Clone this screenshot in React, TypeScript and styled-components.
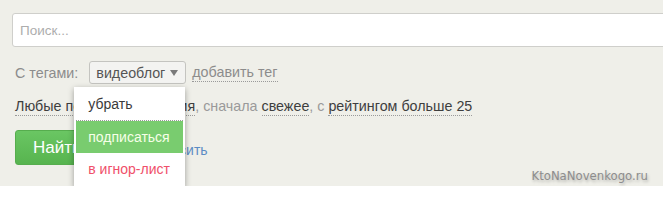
import React from "react";
import styled, { createGlobalStyle } from "styled-components";

const GlobalStyle = createGlobalStyle`
  html, body {
    margin: 0;
    padding: 0;
    background: #ffffff;
    font-family: "Liberation Sans", Arial, sans-serif;
  }
`;

const Panel = styled.div`
  position: relative;
  background: #efefe9;
  height: 186px;
  padding: 13px 0 0 12px;
  box-sizing: border-box;
  overflow-x: clip;
`;

const SearchInput = styled.input`
  display: block;
  width: calc(100% + 20px);
  height: 34px;
  box-sizing: border-box;
  border: 1px solid #cfcfcb;
  border-radius: 3px;
  background: #fff;
  padding: 0 7px;
  font-family: "Liberation Sans", Arial, sans-serif;
  font-size: 13.5px;
  color: #333;
  outline: none;

  &::placeholder {
    color: #adadad;
  }
`;

const Body = styled.div`
  padding-left: 3px;
  font-size: 14.3px;
`;

const TagsRow = styled.div`
  display: flex;
  align-items: center;
  gap: 6px;
  margin-top: 14px;
  height: 23px;
`;

const Label = styled.span`
  color: #8c8c8c;
  margin-right: 5px;
`;

const TagWrap = styled.div`
  position: relative;
`;

const TagSelect = styled.div`
  display: flex;
  align-items: center;
  justify-content: space-between;
  width: 97px;
  height: 23px;
  box-sizing: border-box;
  padding: 0 7px 0 6px;
  border: 1px solid #c4c4c0;
  border-radius: 3px;
  background: #f3f3f1;
  color: #555;
`;

const Caret = styled.span`
  width: 0;
  height: 0;
  border-left: 4px solid transparent;
  border-right: 4px solid transparent;
  border-top: 6px solid #7a7a7a;
`;

const Dotted = styled.span<{ $dark?: boolean }>`
  color: ${(p) => (p.$dark ? "#3e3e3e" : "#8c8c8c")};
  border-bottom: 1px dotted #9a9a9a;
  padding-bottom: 1px;
  cursor: pointer;
`;

const Menu = styled.div`
  position: absolute;
  top: 26px;
  left: -15px;
  width: 111px;
  padding: 0 2px 2px;
  box-sizing: border-box;
  background: #fff;
  box-shadow: 0 2px 6px rgba(0, 0, 0, 0.35);
  z-index: 5;
`;

const MenuItem = styled.div<{ $tone?: "plain" | "active" | "danger" }>`
  height: ${(p) => (p.$tone === "plain" ? "33px" : "32px")};
  display: flex;
  align-items: center;
  padding-left: 12px;
  font-size: 14px;
  white-space: nowrap;
  color: ${(p) =>
    p.$tone === "active" ? "#f6ffe8" : p.$tone === "danger" ? "#f0506a" : "#3a3a3a"};
  background: ${(p) => (p.$tone === "active" ? "#79cc6f" : "#fff")};
  border-bottom: ${(p) => (p.$tone === "plain" ? "1px dotted #999" : "none")};
`;

const FilterLine = styled.div`
  margin-top: 12px;
  line-height: 20px;
  color: #9a9a9a;
`;

const Actions = styled.div`
  display: flex;
  align-items: center;
  margin-top: 14px;
`;

const FindButton = styled.button`
  height: 35px;
  padding: 0 18px 0 17px;
  border: 1px solid #56ad4e;
  border-radius: 3px;
  background: linear-gradient(#6ac663, #57b44f);
  color: #fff;
  font-family: "Liberation Sans", Arial, sans-serif;
  font-size: 17px;
  cursor: pointer;
`;

const ResetLink = styled.a`
  margin-left: 48px;
  margin-top: 4px;
  font-size: 14px;
  color: #5b8cc4;
  text-decoration: none;
`;

const Watermark = styled.div`
  position: absolute;
  right: 15px;
  bottom: 3px;
  font-family: "DejaVu Sans", Verdana, sans-serif;
  font-size: 11.7px;
  color: #8d8d8d;
  text-shadow: 1px 2px 3px rgba(0, 0, 0, 0.25);
`;

export default function App() {
  return (
    <>
      <GlobalStyle />
      <Panel>
        <SearchInput placeholder="Поиск..." />
        <Body>
          <TagsRow>
            <Label>С тегами:</Label>
            <TagWrap>
              <TagSelect>
                видеоблог
                <Caret />
              </TagSelect>
              <Menu>
                <MenuItem $tone="plain">убрать</MenuItem>
                <MenuItem $tone="active">подписаться</MenuItem>
                <MenuItem $tone="danger">в игнор-лист</MenuItem>
              </Menu>
            </TagWrap>
            <Dotted>добавить тег</Dotted>
          </TagsRow>
          <FilterLine>
            <Dotted $dark>Любые посты за всё время</Dotted>, сначала{" "}
            <Dotted $dark>свежее</Dotted>, с{" "}
            <Dotted $dark>рейтингом больше 25</Dotted>
          </FilterLine>
          <Actions>
            <FindButton>Найти</FindButton>
            <ResetLink href="#">сбросить</ResetLink>
          </Actions>
        </Body>
        <Watermark>KtoNaNovenkogo.ru</Watermark>
      </Panel>
    </>
  );
}
